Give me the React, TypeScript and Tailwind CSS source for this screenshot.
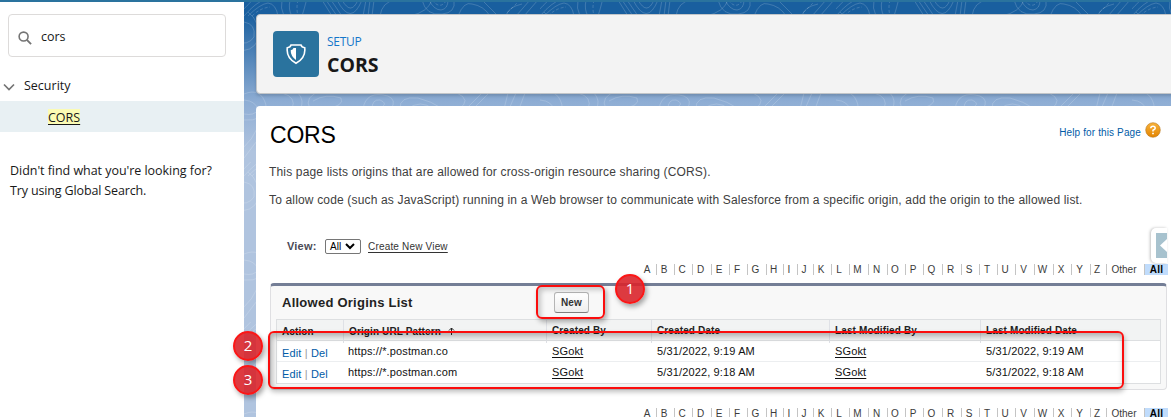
import React from "react";

const letters = [..."ABCDEFGHIJKLMNOPQRSTUVWXYZ", "Other"];

function Rolodex({ className }: { className: string }) {
  return (
    <div
      className={`grid h-3 w-[526px] grid-cols-[16px_18px_18px_19px_18px_18px_19px_17px_14px_16px_18px_18px_19px_19px_18px_18px_19px_19px_18px_18px_18px_19px_19px_18px_19px_16px_38px_23px] text-center text-[10px] leading-[12px] text-[#3c3c3c] ${className}`}
    >
      {letters.map((l) => (
        <span key={l} className="h-[11px] border-r border-[#c4c4c4] pr-[3px] last:pr-0">
          {l}
        </span>
      ))}
      <span className="h-[11px] bg-[#c0dcfc] text-[10px] font-bold leading-[11px] tracking-[0.3px] text-black">All</span>
    </div>
  );
}

function Contours({ className }: { className: string }) {
  return (
    <svg className={className} width="927" height="415" aria-hidden="true">
      <defs>
        <pattern id="topo" width="296" height="160" patternUnits="userSpaceOnUse">
          <g fill="none" stroke="#fff" strokeOpacity=".17" strokeWidth="1">
            <path d="M0 14Q12 0 22-3M4 14Q16 2 24 1Q32 2 34 14M-1 8Q8-2 12-4M38-2Q36 6 40 14M46-2Q44 8 48 14M62 0Q60 8 58 14M78-2L88 14M82-2L93 14M87-2L98 14M93-2Q107 25 118-2M98-2Q107 14 114-2M122-2L119 14M126-2L124 14M130-2L128 14M136 14Q138 0 151-2M166 14Q184 10 188-2M178-2Q182 14 198 12Q212 11 210-2M185-2Q190 8 197 8Q204 7 204-2M214 14Q220-1 228 2Q240 4 246 14M238-2L254 14M262 14Q264 5 278 2M272 14L286-2M280 14L294-2" />
            <path strokeDasharray="3 2" d="M8 14Q16 6 26 5M54-2Q52 6 54 14M188-2Q196 8 202-1M260 14L276-2" />
            <path d="M4 10Q17 20 14 38Q8 51-8 48M0 20Q12 22 10 35Q4 44-8 40M0 92Q17 85 22 103Q20 120 0 118M0 98Q12 99 14 108Q10 114 0 112M0 156Q14 140 22 122M0 145Q8 138 14 125M38 91Q53 95 48 107M54 91Q61 99 56 107M69 99Q82 91 97 96Q101 104 81 107M66 107Q59 94 78 89M119 107Q122 88 144 94Q153 98 147 107M128 107Q128 97 136 98Q143 101 139 104M156 107Q155 94 174 96Q187 99 199 107M163 107Q177 97 189 107M213 91Q228 98 215 107M222 107L238 91M229 107L245 91M264 91L260 107M272 91L265 107M281 91L275 107" />
          </g>
        </pattern>
      </defs>
      <rect width="100%" height="100%" fill="url(#topo)" />
    </svg>
  );
}

function Marker({ n, className }: { n: number; className: string }) {
  return (
    <div
      className={`absolute flex size-[30px] items-center justify-center rounded-full border-2 border-[#fb1616] bg-[#d9252b]/90 pb-px font-['Open_Sans',sans-serif] text-[15px] leading-none text-white shadow-[2px_3px_5px_rgba(0,0,0,0.35)] ${className}`}
    >
      {n}
    </div>
  );
}

const rows = [
  { url: "https://*.postman.co", date: "5/31/2022, 9:19 AM" },
  { url: "https://*.postman.com", date: "5/31/2022, 9:18 AM" },
];

const cols = "grid grid-cols-[67px_203px_105px_178px_151px_178px]";

function Sidebar() {
  return (
    <aside className="w-[244px] shrink-0 bg-white pt-3 font-['Open_Sans','Noto_Sans',sans-serif] text-[12.5px] text-[#181818]">
      <div className="ml-2 flex h-[43px] w-[218px] items-center rounded-[4px] border border-[#dddbda] pl-[9px]">
        <svg width="14" height="14" viewBox="0 0 15 15" className="mt-[4px]" fill="none" stroke="#747474">
          <circle cx="6" cy="6" r="4.8" strokeWidth="1.7" />
          <path d="M9.5 9.5L14 14" strokeWidth="2" />
        </svg>
        <span className="ml-[9px] mt-[3px]">cors</span>
      </div>
      <div className="mt-[18px] flex h-[22px] items-center">
        <svg width="12" height="8" viewBox="0 0 12 8" className="ml-[3px] mt-[1px]" fill="none" stroke="#747474" strokeWidth="1.7">
          <path d="M1 1.5L6 6.5L11 1.5" />
        </svg>
        <span className="ml-[9px]">Security</span>
      </div>
      <div className="mt-1 flex h-[31px] items-center bg-[#e8f0f3] pl-12">
        <span className="h-4 bg-[#fbfbb4] leading-[18px] underline underline-offset-2">CORS</span>
      </div>
      <p className="mt-[29px] pl-[10px] leading-5 tracking-[-0.04px]">
        Didn't find what you're looking for?
        <br />
        <span className="tracking-[-0.14px]">Try using Global Search.</span>
      </p>
    </aside>
  );
}

export default function App() {
  return (
    <div className="relative flex h-[417px] w-[1171px] overflow-hidden border-t-2 border-[#2a739e] bg-white font-['Liberation_Sans',Arial,sans-serif] text-[#333]">
      <Sidebar />
      <main className="relative min-w-0 flex-1 bg-[linear-gradient(#195f9f_0,#195f9f_12px,#8eadd4_100px,#b0c4df_150px)] pl-3 pt-3">
        <Contours className="absolute left-0 top-0" />
        <header className="relative flex h-20 w-[930px] items-center rounded-[4px] border border-[#c2c5c8] bg-[#f3f3f3] pl-4 shadow-[0_2px_3px_rgba(0,0,0,0.15)]">
          <div className="flex size-[46px] items-center justify-center rounded-[4px] bg-[#2a739e]">
            <svg width="20" height="21" viewBox="0 0 20 21" fill="none">
              <path d="M5 1H15Q15.6 3.2 18.7 3.7Q20 13.8 10 19.3Q0 13.8 1.3 3.7Q4.4 3.2 5 1Z" stroke="white" strokeWidth="1.6" />
              <path d="M10 4V16Q4.5 12 4.7 6.3Q7 5.7 7.5 4Z" fill="white" />
            </svg>
          </div>
          <div className="ml-2 mt-[3px] font-['Open_Sans','Noto_Sans',sans-serif]">
            <div className="text-[12px] leading-[18px] tracking-[-0.3px] text-[#1476ca]">SETUP</div>
            <h1 className="text-[19.5px] font-bold leading-[27px] text-[#181818]">CORS</h1>
          </div>
        </header>
        <section className="relative mt-3 h-[330px] w-[930px] rounded-t-[4px] bg-white pl-[14px]">
          <div className="flex h-[52px] items-start justify-between pr-[25px] pt-[14px]">
            <h2 className="text-[23px] leading-[30px] tracking-[-0.2px] text-black">CORS</h2>
            <div className="mt-[2px] flex items-start text-[10px] tracking-[0.13px] text-[#015ba7]">
              <span className="mt-[5px] leading-[12px]">Help for this Page</span>
              <svg width="16" height="16" viewBox="0 0 16 16" className="ml-1">
                <defs>
                  <linearGradient id="orange" x2="0" y2="1">
                    <stop stopColor="#f8b33c" />
                    <stop offset="1" stopColor="#e38400" />
                  </linearGradient>
                </defs>
                <circle cx="8" cy="8" r="7.3" fill="url(#orange)" stroke="#b87822" strokeWidth=".6" />
                <path d="M5.8 6.2Q5.8 4.3 8 4.3Q10.2 4.3 10.2 6.2Q10.2 7.3 8 8.2V9.6" fill="none" stroke="white" strokeWidth="1.5" />
                <path d="M8 10.7V12.3" stroke="white" strokeWidth="1.7" />
              </svg>
            </div>
          </div>
          <div className="-ml-px text-[12px] leading-[28px] tracking-[0.165px] text-[#404040]">
            <p>This page lists origins that are allowed for cross-origin resource sharing (CORS).</p>
            <p>To allow code (such as JavaScript) running in a Web browser to communicate with Salesforce from a specific origin, add the origin to the allowed list.</p>
          </div>
          <div className="ml-[17px] mt-[24px] flex h-4 items-center text-[11px]">
            <span className="w-[38px] font-bold tracking-[0.2px] text-[#4a4a56]">View:</span>
            <span className="flex h-[15px] w-9 items-center rounded-[2px] border border-[#767676] pl-1 text-[10px] text-black">
              All
              <svg width="10" height="7" viewBox="0 0 10 7" className="ml-1" fill="none" stroke="black" strokeWidth="2">
                <path d="M1 1L5 5L9 1" />
              </svg>
            </span>
            <span className="ml-[7px] text-[10px] tracking-[0.18px] text-[#333] underline underline-offset-2">Create New View</span>
          </div>
          <Rolodex className="ml-[371px] mt-[10px]" />
          <div className="mt-[7px] h-[107px] w-[897px] rounded-[4px] border border-t-[3px] border-[#dfdfe2] border-t-[#747e96] bg-[#f8f8f8] px-[5px]">
            <div className="flex h-[33px] items-center pl-[6px]">
              <h3 className="w-[272px] text-[13px] font-bold leading-4 tracking-[0.25px] text-[#222]">Allowed Origins List</h3>
              <span className="flex h-[21px] w-[35px] items-center justify-center rounded-[3px] border border-[#b5b5b5] border-b-[#7f7f7f] bg-[linear-gradient(#fff,#eee)] text-[10px] font-bold tracking-[0.2px] text-[#333]">
                New
              </span>
            </div>
            <div className="border border-[#dddfe1] bg-white">
              <div className={`${cols} h-[21px] border-b border-[#dddfe1] bg-[#f2f3f3] text-[10px] font-bold leading-[22px] tracking-[0.12px] text-[#222] [&>*]:border-r [&>*]:border-[#dfe1e6] [&>*]:pl-[5px]`}>
                <span className="pt-px">Action</span>
                <span className="flex items-center">
                  Origin URL Pattern
                  <svg width="7" height="8" viewBox="0 0 7 8" className="-mt-[2px] ml-[7px]" fill="none" stroke="#222">
                    <path d="M3.5 8V1M1 3.5L3.5 1L6 3.5" />
                  </svg>
                </span>
                <span>Created By</span>
                <span>Created Date</span>
                <span>Last Modified By</span>
                <span className="border-r-0!">Last Modified Date</span>
              </div>
              {rows.map((r) => (
                <div key={r.url} className={`${cols} h-[21px] border-b border-[#eceef0] text-[11px] leading-[20px] tracking-[0.14px] text-[#111] last:border-b-0 [&>*]:pl-[5px]`}>
                  <span className="pt-[2px] text-[#015ba7]">
                    Edit <span className="text-[#999]">|</span> Del
                  </span>
                  <span className="-ml-px">{r.url}</span>
                  <span className="underline underline-offset-2">SGokt</span>
                  <span>{r.date}</span>
                  <span className="underline underline-offset-2">SGokt</span>
                  <span>{r.date}</span>
                </div>
              ))}
            </div>
          </div>
          <Rolodex className="ml-[371px] mt-[18px]" />
        </section>
        <div className="absolute left-[907px] top-[226px] flex h-[35px] w-4 items-center rounded-l-[5px] bg-white pl-[5px] shadow-[-1px_0_3px_rgba(0,0,0,0.25)]">
          <svg width="11" height="25" viewBox="0 0 11 25">
            <rect width="11" height="25" fill="#a7c2ce" />
            <path d="M4 12.5L11 6V19Z" fill="white" />
          </svg>
        </div>
      </main>
      <div className="absolute left-[536px] top-[283px] h-[34px] w-[69px] rounded-[6px] border-2 border-[#fb0d0d] shadow-[2px_3px_5px_rgba(0,0,0,0.3),inset_3px_3px_5px_rgba(0,0,0,0.2)]" />
      <div className="absolute left-[268px] top-[329px] h-[58px] w-[856px] rounded-[6px] border-2 border-[#fb0d0d] shadow-[1px_3px_5px_rgba(0,0,0,0.25),inset_2px_3px_6px_rgba(0,0,0,0.3)]" />
      <Marker n={1} className="left-[615px] top-[272px]" />
      <Marker n={2} className="left-[233px] top-[329px]" />
      <Marker n={3} className="left-[233px] top-[363px]" />
    </div>
  );
}
